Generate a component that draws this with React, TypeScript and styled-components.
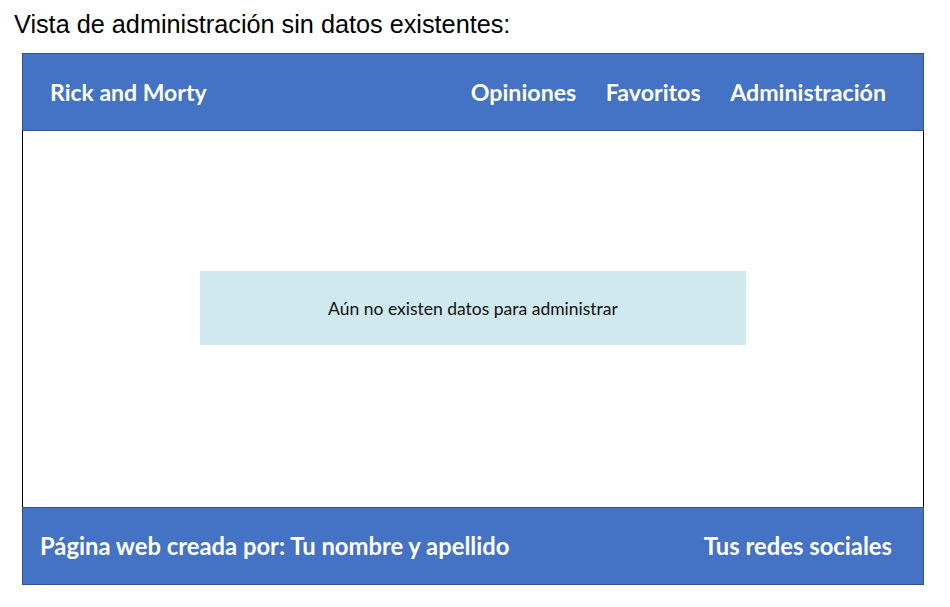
import React from 'react';
import styled, { createGlobalStyle } from 'styled-components';

const GlobalStyle = createGlobalStyle`
  body {
    margin: 0;
    background: #ffffff;
    font-family: 'Liberation Sans', Arial, sans-serif;
  }
`;

const Page = styled.div`
  width: 950px;
  height: 607px;
  padding-top: 10px;
  box-sizing: border-box;
`;

const Title = styled.h1`
  margin: 0 0 15px 14px;
  font-family: 'Liberation Sans', Arial, sans-serif;
  font-weight: 400;
  font-size: 25.25px;
  line-height: 28px;
  color: #000;
`;

const Frame = styled.div`
  margin-left: 22px;
  width: 902px;
  display: flex;
  flex-direction: column;
`;

const Bar = styled.div<{ $left: number; $right: number }>`
  height: 78px;
  box-sizing: border-box;
  background: #4472c4;
  border: 1px solid #2f528f;
  display: flex;
  align-items: center;
  justify-content: space-between;
  padding: 0 ${(p) => p.$right}px 0 ${(p) => p.$left}px;
  color: #ffffff;
  font-family: Lato, 'Open Sans', sans-serif;
  font-weight: 700;
`;

const Brand = styled.span`
  font-size: 23px;
`;

const Nav = styled.nav`
  display: flex;
  gap: 29.5px;
`;

const NavLink = styled.a`
  font-size: 23.2px;
  color: #ffffff;
  text-decoration: none;
`;

const Content = styled.main`
  height: 376px;
  box-sizing: border-box;
  border-left: 1px solid #000;
  border-right: 1px solid #000;
  display: flex;
  align-items: center;
  justify-content: center;
  padding-bottom: 22px;
`;

const Notice = styled.div`
  width: 546px;
  height: 74px;
  background: #cfe9ee;
  display: flex;
  align-items: center;
  justify-content: center;
  font-family: Lato, 'Open Sans', sans-serif;
  font-size: 17.5px;
  color: #111;
`;

const FooterText = styled.span`
  font-size: 23.8px;
  font-weight: 700;
`;

export default function App() {
  return (
    <Page>
      <GlobalStyle />
      <Title>Vista de administración sin datos existentes:</Title>
      <Frame>
        <Bar $left={27} $right={37}>
          <Brand>Rick and Morty</Brand>
          <Nav>
            <NavLink>Opiniones</NavLink>
            <NavLink>Favoritos</NavLink>
            <NavLink>Administración</NavLink>
          </Nav>
        </Bar>
        <Content>
          <Notice>Aún no existen datos para administrar</Notice>
        </Content>
        <Bar $left={17} $right={31}>
          <FooterText>Página web creada por: Tu nombre y apellido</FooterText>
          <FooterText>Tus redes sociales</FooterText>
        </Bar>
      </Frame>
    </Page>
  );
}
